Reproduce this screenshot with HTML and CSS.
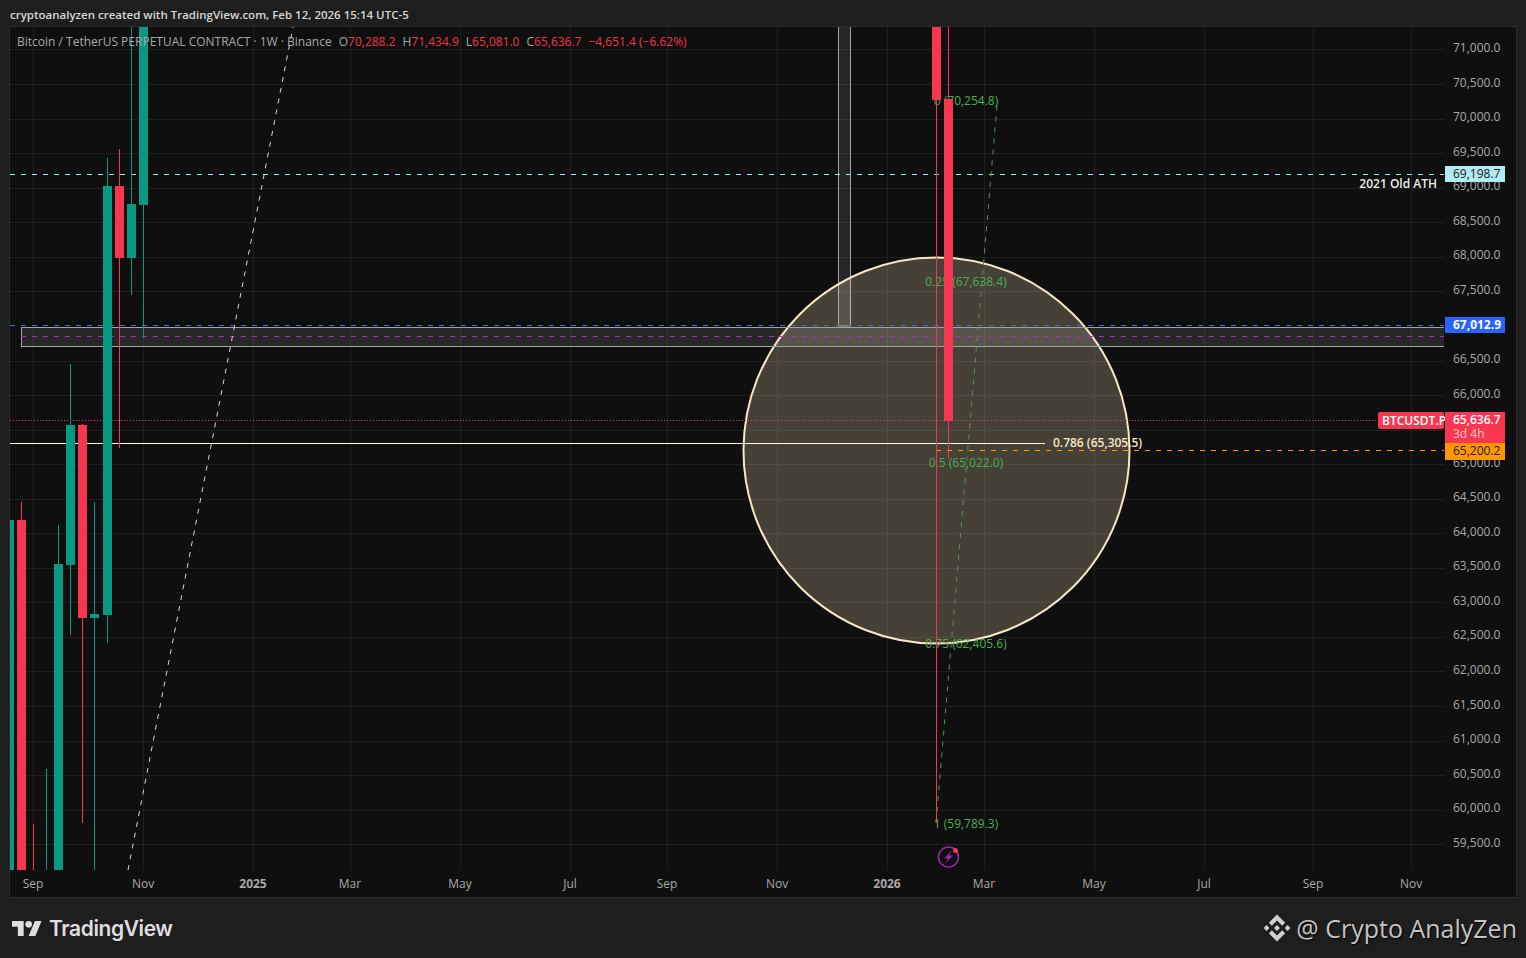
FILE: index.html
```html
<!DOCTYPE html>
<html lang="en">
<head>
    <meta charset="UTF-8">
    <title>BTCUSDT.P 1W chart</title>
    <link rel="stylesheet" href="styles.css">
</head>
<body>
    <div class="snapshot-head">cryptoanalyzen created with TradingView.com, Feb 12, 2026 15:14 UTC-5</div>

    <div class="chart">
        <svg class="chart-canvas" viewBox="10 27 1506 870" width="1506" height="870">
            <!-- grid -->
            <path class="grid" d="M10 49.5H1444M10 84.5H1444M10 119.5H1444M10 153.5H1444M10 188.5H1444M10 222.5H1444M10 257.5H1444M10 291.5H1444M10 361.5H1444M10 395.5H1444M10 430.5H1444M10 464.5H1444M10 499.5H1444M10 533.5H1444M10 568.5H1444M10 602.5H1444M10 637.5H1444M10 671.5H1444M10 706.5H1444M10 741.5H1444M10 775.5H1444M10 810.5H1444M10 844.5H1444"/>
            <path class="grid" d="M33.5 27V870M143.5 27V870M253.5 27V870M350.5 27V870M460.5 27V870M570.5 27V870M667.5 27V870M777.5 27V870M887.5 27V870M984.5 27V870M1094.5 27V870M1204.5 27V870M1313.5 27V870M1411.5 27V870"/>

            <!-- zones and circle -->
            <rect class="box" x="838.5" y="20" width="12" height="306"/>
            <circle class="zone-circle" cx="936.5" cy="450.5" r="193"/>
            <rect class="box" x="21.5" y="327.5" width="1430" height="19"/>

            <!-- levels -->
            <path class="level-blue" d="M10 325.5H1444"/>
            <path class="level-purple" d="M21 336.5H1444"/>
            <path class="level-cyan" d="M10 174.5H1444"/>
            <path class="level-red" d="M10 420.5H1378"/>
            <path class="level-orange" d="M936 450.5H1444"/>
            <path class="level-cream" d="M10 443.5H1045"/>

            <!-- trend lines -->
            <path class="trend-cream" d="M128 870L293 27"/>
            <path class="trend-green" d="M936 823L997 105"/>

            <!-- fib labels, the candles sit on top of them -->
            <text class="fib" x="966" y="105" text-anchor="middle">0 (70,254.8)</text>
            <text class="fib" x="966" y="286" text-anchor="middle">0.25 (67,638.4)</text>
            <text class="fib" x="966" y="467" text-anchor="middle">0.5 (65,022.0)</text>
            <text class="fib" x="966" y="648" text-anchor="middle">0.75 (62,405.6)</text>
            <text class="fib" x="966" y="828" text-anchor="middle">1 (59,789.3)</text>
            <text class="fib-cream" x="1053" y="447">0.786 (65,305.5)</text>
            <text class="ath" x="1437" y="188" text-anchor="end">2021 Old ATH</text>

            <!-- candles -->
            <g class="up">
                <rect x="10" y="520" width="4" height="350"/>
                <rect x="46" y="769" width="1" height="101"/>
                <rect x="58" y="525" width="1" height="39"/>
                <rect x="54" y="564" width="9" height="306"/>
                <rect x="70" y="364" width="1" height="271"/>
                <rect x="66" y="425" width="9" height="140"/>
                <rect x="94" y="502" width="1" height="368"/>
                <rect x="90" y="614" width="9" height="4"/>
                <rect x="107" y="158" width="1" height="485"/>
                <rect x="103" y="186" width="9" height="429"/>
                <rect x="131" y="27" width="1" height="268"/>
                <rect x="127" y="204" width="9" height="54"/>
                <rect x="143" y="205" width="1" height="133"/>
                <rect x="139" y="27" width="9" height="178"/>
            </g>
            <g class="down">
                <rect x="21" y="502" width="1" height="18"/>
                <rect x="17" y="520" width="9" height="350"/>
                <rect x="33" y="824" width="1" height="46"/>
                <rect x="82" y="424" width="1" height="399"/>
                <rect x="78" y="425" width="9" height="193"/>
                <rect x="119" y="149" width="1" height="299"/>
                <rect x="115" y="186" width="9" height="72"/>
                <rect x="936" y="100" width="1" height="723"/>
                <rect x="932" y="27" width="9" height="73"/>
                <rect x="948" y="27" width="1" height="432"/>
                <rect x="944" y="99" width="9" height="322"/>
            </g>

            <!-- event icon -->
            <circle class="event-ring" cx="948.5" cy="857" r="10"/>
            <path class="event-bolt" d="M952 850.5L944 858.5H948L945 863.5L953 855.5H949Z"/>
            <circle class="event-dot" cx="955.5" cy="850.5" r="2.5"/>

            <!-- price scale -->
            <rect class="scale-bg" x="1444" y="27" width="71" height="843"/>
            <g class="scale-text">
                <text x="1453" y="52">71,000.0</text>
                <text x="1453" y="87">70,500.0</text>
                <text x="1453" y="121">70,000.0</text>
                <text x="1453" y="156">69,500.0</text>
                <text x="1453" y="190">69,000.0</text>
                <text x="1453" y="225">68,500.0</text>
                <text x="1453" y="259">68,000.0</text>
                <text x="1453" y="294">67,500.0</text>
                <text x="1453" y="363">66,500.0</text>
                <text x="1453" y="398">66,000.0</text>
                <text x="1453" y="467">65,000.0</text>
                <text x="1453" y="501">64,500.0</text>
                <text x="1453" y="536">64,000.0</text>
                <text x="1453" y="570">63,500.0</text>
                <text x="1453" y="605">63,000.0</text>
                <text x="1453" y="639">62,500.0</text>
                <text x="1453" y="674">62,000.0</text>
                <text x="1453" y="709">61,500.0</text>
                <text x="1453" y="743">61,000.0</text>
                <text x="1453" y="778">60,500.0</text>
                <text x="1453" y="812">60,000.0</text>
                <text x="1453" y="847">59,500.0</text>
            </g>

            <!-- price tags -->
            <rect class="tag-cyan" x="1445" y="166" width="60" height="16"/>
            <text class="tag-text-dark" x="1453" y="178">69,198.7</text>
            <rect class="tag-blue" x="1445" y="317" width="60" height="16"/>
            <text class="tag-text-bold" x="1453" y="329">67,012.9</text>
            <rect class="tag-red" x="1378" y="412" width="66" height="17" rx="2"/>
            <text class="tag-text-light" x="1382" y="425">BTCUSDT.P</text>
            <rect class="tag-red" x="1445" y="412" width="60" height="31"/>
            <text class="tag-text-light" x="1453" y="424">65,636.7</text>
            <text class="tag-text-faded" x="1453" y="438">3d 4h</text>
            <rect class="tag-orange" x="1445" y="443" width="60" height="17"/>
            <text class="tag-text-dark" x="1453" y="455">65,200.2</text>

            <!-- time scale -->
            <g class="time-text" text-anchor="middle">
                <text x="33" y="888">Sep</text>
                <text x="143" y="888">Nov</text>
                <text class="time-year" x="253" y="888">2025</text>
                <text x="350" y="888">Mar</text>
                <text x="460" y="888">May</text>
                <text x="570" y="888">Jul</text>
                <text x="667" y="888">Sep</text>
                <text x="777" y="888">Nov</text>
                <text class="time-year" x="887" y="888">2026</text>
                <text x="984" y="888">Mar</text>
                <text x="1094" y="888">May</text>
                <text x="1204" y="888">Jul</text>
                <text x="1313" y="888">Sep</text>
                <text x="1411" y="888">Nov</text>
            </g>
        </svg>

        <div class="legend">
            <span class="legend-title">Bitcoin / TetherUS PERPETUAL CONTRACT · 1W · Binance</span>
            <span class="legend-ohlc">O<b>70,288.2</b></span>
            <span class="legend-ohlc">H<b>71,434.9</b></span>
            <span class="legend-ohlc">L<b>65,081.0</b></span>
            <span class="legend-ohlc">C<b>65,636.7</b></span>
            <span class="legend-ohlc"><b>−4,651.4 (−6.62%)</b></span>
        </div>
    </div>

    <div class="snapshot-foot">
        <div class="brand">
            <svg class="brand-mark" viewBox="0 4 36 18" width="30" height="15">
                <path d="M14 22H7V11H0V4h14v18zM28 22h-8l7.5-18h8L28 22z"/>
                <circle cx="20" cy="8" r="4"/>
            </svg>
            <span class="brand-name">TradingView</span>
        </div>
        <div class="watermark">
            <svg class="watermark-mark" viewBox="0 0 32 32" width="28" height="28">
                <path d="M10.1 13.4L16 7.5L21.9 13.4L25.3 10L16 .7L6.7 10ZM21.9 18.6L16 24.5L10.1 18.6L6.7 22L16 31.3L25.3 22ZM.7 16L4 12.7L7.3 16L4 19.3ZM24.7 16L28 12.7L31.3 16L28 19.3ZM12.6 16L16 12.6L19.4 16L16 19.4Z"/>
            </svg>
            <span>@ Crypto AnalyZen</span>
        </div>
    </div>
</body>
</html>
```

FILE: styles.css
```css
body {
    margin: 0;
    width: 1526px;
    height: 958px;
    overflow: hidden;
    background-color: #1e1e1e;
    font-family: "Open Sans", sans-serif;
    display: flex;
    flex-direction: column;
}
.snapshot-head {
    height: 26px;
    padding-left: 10px;
    font-size: 11.5px;
    font-weight: 600;
    line-height: 29px;
    color: #d6d6d6;
}
.chart {
    position: relative;
    width: 1506px;
    height: 870px;
    margin-left: 9px;
    border: 1px solid #2c2c2c;
    background-color: #0f0f0f;
}
.chart-canvas {
    display: block;
}
.legend {
    position: absolute;
    top: 6px;
    left: 7px;
    display: flex;
    gap: 7px;
    font-size: 12px;
    line-height: 17px;
    color: #a9a9a9;
    white-space: nowrap;
}
.legend b {
    font-weight: 400;
    color: #f23645;
}
.snapshot-foot {
    flex: 1;
    display: flex;
    justify-content: space-between;
    align-items: center;
    padding: 0 9px 0 12px;
}
.brand {
    display: flex;
    align-items: center;
    gap: 7px;
    color: #dedede;
}
.brand-mark {
    fill: #dedede;
}
.brand-name {
    font-family: Inter, sans-serif;
    font-size: 21px;
    font-weight: 600;
    letter-spacing: -0.4px;
}
.watermark {
    display: flex;
    align-items: center;
    gap: 5px;
    font-size: 25px;
    color: #c4c4c4;
    text-shadow: 1px 1px 1px #000;
}
.watermark-mark {
    fill: #cfcfcf;
}

/* chart drawing */
.grid {
    stroke: #1f1f1f;
    stroke-width: 1;
    fill: none;
}
.box {
    fill: rgba(255, 255, 255, 0.1);
    stroke: #a3a3a3;
    stroke-width: 1;
}
.zone-circle {
    fill: rgba(255, 232, 190, 0.23);
    stroke: #f7e7c6;
    stroke-width: 2;
}
.level-blue, .level-purple, .level-cyan, .level-red, .level-orange, .level-cream, .trend-cream, .trend-green {
    fill: none;
    stroke-width: 1;
}
.level-blue {
    stroke: #3d6fe0;
    stroke-dasharray: 5 6;
}
.level-purple {
    stroke: #a62fc4;
    stroke-dasharray: 5 6;
}
.level-cyan {
    stroke: #a9e6ee;
    stroke-dasharray: 5 6;
}
.level-red {
    stroke: #f7374f;
    stroke-dasharray: 1 2;
}
.level-orange {
    stroke: #ff9800;
    stroke-dasharray: 5 6;
}
.level-cream {
    stroke: #fff8dc;
}
.trend-cream {
    stroke: #e0d6b4;
    stroke-dasharray: 5 6;
}
.trend-green {
    stroke: #4a9a50;
    stroke-dasharray: 5 6;
}
.up {
    fill: #089981;
}
.down {
    fill: #f7374f;
}
.fib {
    font-size: 12px;
    fill: #4caf50;
}
.fib-cream {
    font-size: 12px;
    font-weight: 600;
    fill: #f7e7c6;
}
.ath {
    font-size: 12px;
    font-weight: 600;
    fill: #ececec;
}
.event-ring {
    fill: none;
    stroke: #9c27b0;
    stroke-width: 1.5;
}
.event-bolt {
    fill: #9c27b0;
}
.event-dot {
    fill: #f7374f;
}
.scale-bg {
    fill: #0f0f0f;
}
.scale-text, .time-text {
    font-size: 12px;
    fill: #a9a9a9;
}
.time-year {
    font-weight: 700;
}
.tag-cyan {
    fill: #b2ebf2;
}
.tag-blue {
    fill: #2962ff;
}
.tag-red {
    fill: #f7374f;
}
.tag-orange {
    fill: #ff9800;
}
.tag-text-dark {
    font-size: 12px;
    fill: #1a1a1a;
}
.tag-text-bold {
    font-size: 12px;
    font-weight: 700;
    fill: #ffffff;
}
.tag-text-light {
    font-size: 12px;
    font-weight: 600;
    fill: #ffffff;
}
.tag-text-faded {
    font-size: 12px;
    fill: #ffc9d0;
}
```
